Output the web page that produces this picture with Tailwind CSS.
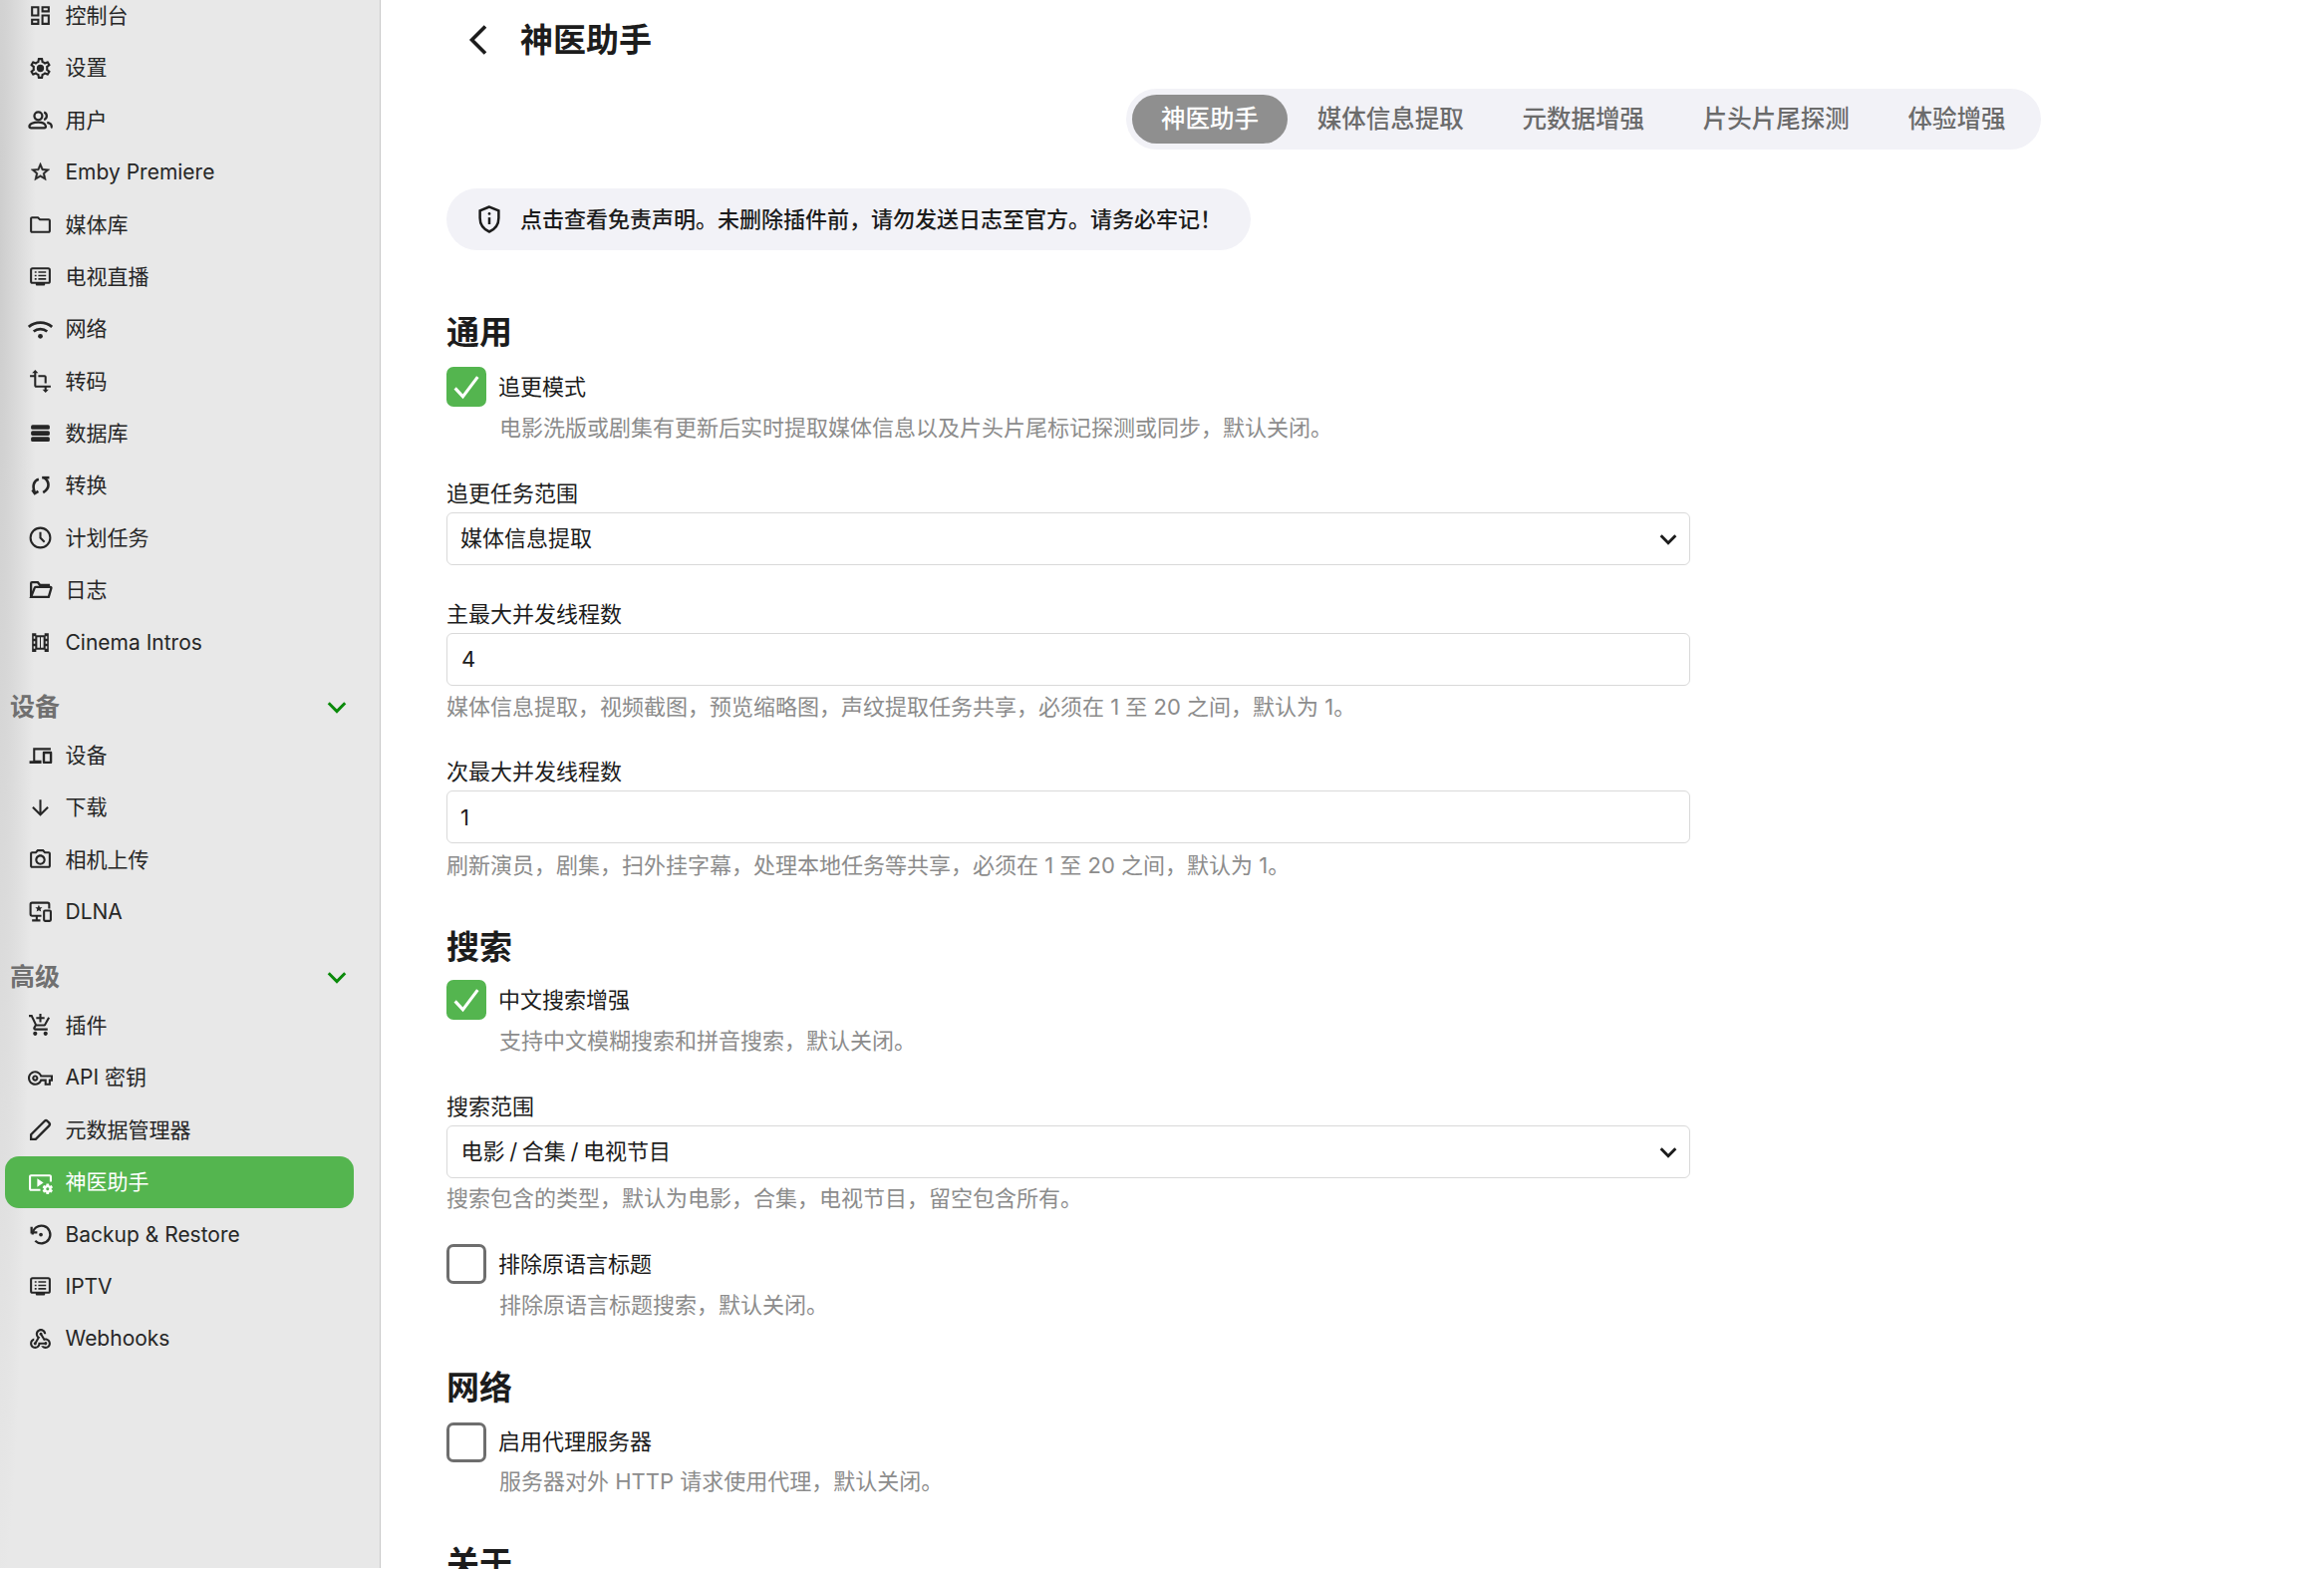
<!DOCTYPE html>
<html lang="zh-CN">
<head>
  <meta charset="UTF-8">
  <title>神医助手</title>
  <script src="https://cdn.jsdelivr.net/npm/@tailwindcss/browser@4"></script>
</head>
<body class="h-[1574px] overflow-hidden bg-white font-['Inter','Noto_Sans_CJK_SC',sans-serif] text-[#1c1c1c]">
<div class="flex h-[1574px]">

  <!-- sidebar -->
  <aside class="w-[382px] h-[1573px] shrink-0 overflow-hidden border-r border-[#c8c8c8] bg-[radial-gradient(ellipse_36px_1350px_at_0_250px,#cdcdcd,#e8e8e8)] text-[21px] text-[#262626]">
    <nav class="-mt-[10.5px]">
      <a class="flex h-[52.4px] items-center gap-[12.5px] pl-7">
        <svg class="size-[25px]" viewBox="0 0 24 24" fill="currentColor"><path d="M19 5v2h-4V5h4M9 5v6H5V5h4m10 8v6h-4v-6h4M9 17v2H5v-2h4M21 3h-8v6h8V3zM11 3H3v10h8V3zm10 8h-8v10h8V11zm-10 4H3v6h8v-6z"/></svg>
        <span>控制台</span>
      </a>
      <a class="flex h-[52.4px] items-center gap-[12.5px] pl-7">
        <svg class="size-[25px]" viewBox="0 0 24 24" fill="currentColor"><path d="M19.43 12.98c.04-.32.07-.64.07-.98 0-.34-.03-.66-.07-.98l2.11-1.65c.19-.15.24-.42.12-.64l-2-3.46c-.09-.16-.26-.25-.44-.25-.06 0-.12.01-.17.03l-2.49 1c-.52-.4-1.08-.73-1.69-.98l-.38-2.65C14.46 2.18 14.25 2 14 2h-4c-.25 0-.46.18-.49.42l-.38 2.65c-.61.25-1.17.59-1.69.98l-2.49-1c-.06-.02-.12-.03-.18-.03-.17 0-.34.09-.43.25l-2 3.46c-.13.22-.07.49.12.64l2.11 1.65c-.04.32-.07.65-.07.98 0 .33.03.66.07.98l-2.11 1.65c-.19.15-.24.42-.12.64l2 3.46c.09.16.26.25.44.25.06 0 .12-.01.17-.03l2.49-1c.52.4 1.08.73 1.69.98l.38 2.65c.03.24.24.42.49.42h4c.25 0 .46-.18.49-.42l.38-2.65c.61-.25 1.17-.59 1.69-.98l2.49 1c.06.02.12.03.18.03.17 0 .34-.09.43-.25l2-3.46c.12-.22.07-.49-.12-.64l-2.11-1.65zm-1.98-1.71c.04.31.05.52.05.73 0 .21-.02.43-.05.73l-.14 1.13.89.7 1.08.84-.7 1.21-1.27-.51-1.04-.42-.9.68c-.43.32-.84.56-1.25.73l-1.06.43-.16 1.13-.2 1.35h-1.4l-.19-1.35-.16-1.13-1.06-.43c-.43-.18-.83-.41-1.23-.71l-.91-.7-1.06.43-1.27.51-.7-1.21 1.08-.84.89-.7-.14-1.13c-.03-.31-.05-.54-.05-.74s.02-.43.05-.73l.14-1.13-.89-.7-1.08-.84.7-1.21 1.27.51 1.04.42.9-.68c.43-.32.84-.56 1.25-.73l1.06-.43.16-1.13.2-1.35h1.39l.19 1.35.16 1.13 1.06.43c.43.18.83.41 1.23.71l.91.7 1.06-.43 1.27-.51.7 1.21-1.07.85-.89.7.14 1.13zM12 8.5a3.5 3.5 0 1 0 0 7 3.5 3.5 0 0 0 0-7z"/></svg>
        <span>设置</span>
      </a>
      <a class="flex h-[52.4px] items-center gap-[12.5px] pl-7">
        <svg class="size-[25px]" viewBox="0 0 24 24" fill="none" stroke="currentColor" stroke-width="2.2"><circle cx="10" cy="8" r="3.8"/><path d="M15.500 4.400a3.800 3.800 0 0 1 0 7.200"/><path d="M1.400 18c0-2.300 3.800-3.900 8.600-3.900 3.900 0 6.500 1.500 7.100 3.400.4 1.400-.3 2-1.300 2H3c-1 0-1.600-.5-1.600-1.500z"/><path d="M18.500 14.300c2.400.5 4.300 1.600 4.300 3.600 0 .7-.2 1.200-.6 1.500"/></svg>
        <span>用户</span>
      </a>
      <a class="flex h-[52.4px] items-center gap-[12.5px] pl-7">
        <svg class="size-[25px]" viewBox="-1.500 -1.500 27 27" fill="currentColor" stroke="currentColor" stroke-width=".6"><path d="M22 9.24l-7.19-.62L12 2 9.19 8.63 2 9.24l5.46 4.73L5.82 21 12 17.27 18.18 21l-1.63-7.03L22 9.24zM12 15.4l-3.76 2.27 1-4.28-3.32-2.88 4.38-.38L12 6.1l1.71 4.04 4.38.38-3.32 2.88 1 4.28L12 15.4z"/></svg>
        <span>Emby Premiere</span>
      </a>
      <a class="flex h-[52.4px] items-center gap-[12.5px] pl-7">
        <svg class="size-[25px]" viewBox="0 0 24 24" fill="currentColor"><path d="M9.17 6l2 2H20v10H4V6h5.17M10 4H4c-1.1 0-1.99.9-1.99 2L2 18c0 1.1.9 2 2 2h16c1.1 0 2-.9 2-2V8c0-1.1-.9-2-2-2h-8l-2-2z"/></svg>
        <span>媒体库</span>
      </a>
      <a class="flex h-[52.4px] items-center gap-[12.5px] pl-7">
        <svg class="size-[25px]" viewBox="0 0 24 24" fill="currentColor"><rect x="3" y="4" width="18" height="14" rx="1.500" fill="none" stroke="currentColor" stroke-width="2"/><path d="M6.500 7h1.800v1.500H6.500zM10 7h7.500v1.500H10zM6.500 10.300h1.800v1.500H6.500zM10 10.300h7.500v1.500H10zM6.500 13.500h1.800V15H6.500zM10 13.500h7.500V15H10z"/><rect x="7.500" y="18" width="9" height="2.600" rx="1"/></svg>
        <span>电视直播</span>
      </a>
      <a class="flex h-[52.4px] items-center gap-[12.5px] pl-7">
        <svg class="size-[25px]" viewBox="0 0 24 24" fill="none" stroke="currentColor" stroke-width="2.600"><path d="M.8 9.500c6.200-5.400 16.200-5.400 22.400 0"/><path d="M5.500 14c3.700-3.100 9.300-3.100 13 0"/><circle cx="12" cy="18.500" r="2.300" fill="currentColor" stroke="none"/></svg>
        <span>网络</span>
      </a>
      <a class="flex h-[52.4px] items-center gap-[12.5px] pl-7">
        <svg class="size-[25px]" viewBox="0 0 24 24" fill="currentColor"><path d="M22 18v-2H8V4h2L7 1 4 4h2v2H2v2h4v8c0 1.1.9 2 2 2h8v2h-2l3 3 3-3h-2v-2h4zM10 8h6v6h2V8c0-1.1-.9-2-2-2h-6v2z"/></svg>
        <span>转码</span>
      </a>
      <a class="flex h-[52.4px] items-center gap-[12.5px] pl-7">
        <svg class="size-[25px]" viewBox="0 0 24 24" fill="currentColor"><rect x="3" y="4" width="18" height="4.500" rx="1.500"/><rect x="3" y="9.800" width="18" height="4.500" rx="1.500"/><rect x="3" y="15.600" width="18" height="4.500" rx="1.500"/></svg>
        <span>数据库</span>
      </a>
      <a class="flex h-[52.4px] items-center gap-[12.5px] pl-7">
        <svg class="size-[25px]" viewBox="0 0 24 24" fill="none" stroke="currentColor" stroke-width="2.500"><path d="M10.400 5.600C6 6.800 3.800 11.500 6.600 18.400"/><path d="M4.300 15.800l2.300 3.400 3.400-2.100"/><path d="M13.600 4h7"/><path d="M15.500 4c5 3.500 6.500 10-.9 14.400"/></svg>
        <span>转换</span>
      </a>
      <a class="flex h-[52.4px] items-center gap-[12.5px] pl-7">
        <svg class="size-[25px]" viewBox="0 0 24 24" fill="none" stroke="currentColor" stroke-width="2"><circle cx="12" cy="12" r="9.500"/><path d="M12 6.500V12l4 4"/></svg>
        <span>计划任务</span>
      </a>
      <a class="flex h-[52.4px] items-center gap-[12.5px] pl-7">
        <svg class="size-[25px]" viewBox="0 0 24 24" fill="none" stroke="currentColor" stroke-width="2.200"><path d="M3 19V6a1 1 0 0 1 1-1h5.500l2 2.500H20v2"/><path d="M3 19h17l2.500-8.500a.8.8 0 0 0-.8-1H7.500a1 1 0 0 0-1 .7z"/></svg>
        <span>日志</span>
      </a>
      <a class="flex h-[52.4px] items-center gap-[12.5px] pl-7">
        <svg class="size-[25px]" viewBox="0 0 24 24" fill="currentColor"><path d="M4 3h4v2h8V3h4v18h-4v-2H8v2H4zM9 7v10h2.500V7zm3.500 0v10H15V7zM5.500 6v2.500H7V6zm11.500 0v2.500h1.500V6zM5.500 10.700v2.600H7v-2.600zm11.500 0v2.600h1.500v-2.600zM5.500 15.500V18H7v-2.500zm11.500 0V18h1.500v-2.500z" fill-rule="evenodd"/></svg>
        <span>Cinema Intros</span>
      </a>
    </nav>

    <div class="flex h-[61px] items-end justify-between pb-[5.5px] pl-[10px] pr-[32px]">
      <span class="text-[25px] leading-[34px] font-semibold text-[#707070]">设备</span>
      <svg class="mb-[6px] size-[22px] text-[#0a8a0a]" viewBox="0 0 24 24" fill="none" stroke="currentColor" stroke-width="3.200"><path d="M3 8l9 9 9-9"/></svg>
    </div>
    <nav>
      <a class="flex h-[52.4px] items-center gap-[12.5px] pl-7">
        <svg class="size-[25px]" viewBox="0 0 24 24" fill="currentColor"><path d="M5 5h17v2.200H7V17h6v3.200H1.500V17.500H5zM15.500 8.500h6.500c.8 0 1.300.5 1.300 1.300v9.100c0 .8-.5 1.300-1.300 1.300h-6.500c-.8 0-1.300-.5-1.300-1.300V9.800c0-.8.500-1.300 1.300-1.300zm1 2.200v7.300h4.500v-7.300z" fill-rule="evenodd"/></svg>
        <span>设备</span>
      </a>
      <a class="flex h-[52.4px] items-center gap-[12.5px] pl-7">
        <svg class="size-[25px]" viewBox="0 0 24 24" fill="currentColor"><path d="M20 12l-1.410-1.410L13 16.170V4h-2v12.170l-5.580-5.590L4 12l8 8 8-8z"/></svg>
        <span>下载</span>
      </a>
      <a class="flex h-[52.4px] items-center gap-[12.5px] pl-7">
        <svg class="size-[25px]" viewBox="0 0 24 24" fill="currentColor"><path d="M14.120 4l1.830 2H20v12H4V6h4.050l1.830-2h4.240M15 2H9L7.170 4H4c-1.100 0-2 .9-2 2v12c0 1.100.9 2 2 2h16c1.100 0 2-.9 2-2V6c0-1.100-.9-2-2-2h-3.170L15 2zm-3 7c1.650 0 3 1.350 3 3s-1.350 3-3 3-3-1.350-3-3 1.350-3 3-3m0-2c-2.760 0-5 2.240-5 5s2.240 5 5 5 5-2.240 5-5-2.240-5-5-5z"/></svg>
        <span>相机上传</span>
      </a>
      <a class="flex h-[52.4px] items-center gap-[12.5px] pl-7">
        <svg class="size-[25px]" viewBox="0 0 24 24" fill="none" stroke="currentColor" stroke-width="2"><path d="M13 16H4a1.500 1.500 0 0 1-1.500-1.500V5A1.500 1.500 0 0 1 4 3.500h15A1.500 1.500 0 0 1 20.500 5v4"/><path d="M4 20.500h8M8.500 16v4.500"/><rect x="15.500" y="11" width="6.500" height="10" rx="1"/><path d="M10.500 5.500l1 2.300 2.400.2-1.800 1.600.6 2.400-2.200-1.300-2.200 1.300.6-2.400L7 8l2.400-.2z" fill="currentColor" stroke="none"/></svg>
        <span>DLNA</span>
      </a>
    </nav>

    <div class="flex h-[61.5px] items-end justify-between pb-[5.5px] pl-[10px] pr-[32px]">
      <span class="text-[25px] leading-[34px] font-semibold text-[#707070]">高级</span>
      <svg class="mb-[6px] size-[22px] text-[#0a8a0a]" viewBox="0 0 24 24" fill="none" stroke="currentColor" stroke-width="3.200"><path d="M3 8l9 9 9-9"/></svg>
    </div>
    <nav>
      <a class="flex h-[52.4px] items-center gap-[12.5px] pl-7">
        <svg class="size-[25px]" viewBox="0 0 24 24" fill="currentColor"><path d="M11 9h2V6h3V4h-3V1h-2v3H8v2h3v3zm-4 9c-1.100 0-1.990.9-1.990 2S5.900 22 7 22s2-.9 2-2-.9-2-2-2zm10 0c-1.100 0-1.990.9-1.990 2s.89 2 1.990 2 2-.9 2-2-.9-2-2-2zm-9.830-3.250l.03-.12.9-1.630h7.450c.75 0 1.410-.41 1.750-1.030l3.860-7.010L19.420 4h-.01l-1.100 2-2.760 5H8.530l-.13-.27L6.160 6l-.95-2-.94-2H1v2h2l3.600 7.590-1.350 2.450c-.16.28-.25.61-.25.96 0 1.100.9 2 2 2h12v-2H7.420c-.13 0-.25-.11-.25-.25z"/></svg>
        <span>插件</span>
      </a>
      <a class="flex h-[52.4px] items-center gap-[12.5px] pl-7">
        <svg class="size-[25px]" viewBox="0 0 24 24" fill="currentColor"><path d="M22 19h-6v-4h-2.680c-1.140 2.420-3.600 4-6.320 4-3.860 0-7-3.140-7-7s3.140-7 7-7c2.720 0 5.170 1.580 6.320 4H24v6h-2v4zm-4-2h2v-4h2v-2H11.940l-.23-.67C11.010 8.340 9.110 7 7 7c-2.760 0-5 2.240-5 5s2.240 5 5 5c2.110 0 4.010-1.340 4.710-3.330l.23-.67H18v4zM7 15c-1.650 0-3-1.350-3-3s1.350-3 3-3 3 1.350 3 3-1.350 3-3 3zm0-4c-.55 0-1 .45-1 1s.45 1 1 1 1-.45 1-1-.45-1-1-1z"/></svg>
        <span>API 密钥</span>
      </a>
      <a class="flex h-[52.4px] items-center gap-[12.5px] pl-7">
        <svg class="size-[25px]" viewBox="0 0 24 24" fill="none" stroke="currentColor" stroke-width="2.200"><path d="M3 21v-4.500L16 3.600a2 2 0 0 1 2.800 0l1.600 1.600a2 2 0 0 1 0 2.800L7.500 21z"/></svg>
        <span>元数据管理器</span>
      </a>
      <a class="ml-[5px] mr-[26px] flex h-[52.4px] items-center gap-[12.5px] rounded-[14px] bg-[#54b54f] pl-[23px] text-white">
        <svg class="size-[25px]" viewBox="0 0 24 24" fill="currentColor"><path d="M3 6h18v5h2V6c0-1.100-.9-2-2-2H3C1.900 4 1 4.900 1 6v12c0 1.100.9 2 2 2h9v-2H3V6z"/><path d="M15 12l-6-4v8l6-4z"/><path d="M22.710 18.430c.03-.29.04-.58.01-.86l1.070-.85c.1-.08.12-.21.06-.32l-1.030-1.790c-.06-.11-.19-.15-.31-.11L21.230 15c-.23-.17-.48-.31-.75-.42l-.2-1.360c-.02-.13-.12-.22-.25-.22h-2.070c-.12 0-.23.09-.25.21l-.2 1.360c-.26.11-.51.26-.74.42l-1.280-.5c-.12-.05-.25 0-.31.11l-1.030 1.790c-.06.11-.04.24.06.32l1.070.86c-.03.29-.04.58-.01.86l-1.070.85c-.1.08-.12.21-.06.32l1.030 1.790c.06.11.19.15.31.11l1.270-.5c.23.17.48.31.75.42l.2 1.360c.02.12.12.21.25.21h2.070c.12 0 .23-.09.25-.21l.2-1.360c.26-.11.51-.26.74-.42l1.280.5c.12.05.25 0 .31-.11l1.030-1.790c.06-.11.04-.24-.06-.32l-1.070-.85zM19 19.500c-.83 0-1.500-.67-1.500-1.500s.67-1.500 1.500-1.500 1.500.67 1.500 1.500-.67 1.500-1.500 1.500z"/></svg>
        <span>神医助手</span>
      </a>
      <a class="flex h-[52.4px] items-center gap-[12.5px] pl-7">
        <svg class="size-[25px]" viewBox="0 0 24 24" fill="none" stroke="currentColor" stroke-width="2.200"><path d="M4.500 12a8.500 8.500 0 1 1 2.500 6"/><path d="M3.500 4.500v5.500H9" stroke-width="2.200"/><circle cx="12.500" cy="12" r="1.800" fill="currentColor" stroke="none"/></svg>
        <span>Backup &amp; Restore</span>
      </a>
      <a class="flex h-[52.4px] items-center gap-[12.5px] pl-7">
        <svg class="size-[25px]" viewBox="0 0 24 24" fill="currentColor"><rect x="3" y="4" width="18" height="14" rx="1.500" fill="none" stroke="currentColor" stroke-width="2"/><path d="M6.500 7h1.800v1.500H6.500zM10 7h7.500v1.500H10zM6.500 10.300h1.800v1.500H6.500zM10 10.300h7.500v1.500H10zM6.500 13.500h1.800V15H6.500zM10 13.500h7.500V15H10z"/><rect x="7.500" y="18" width="9" height="2.600" rx="1"/></svg>
        <span>IPTV</span>
      </a>
      <a class="flex h-[52.4px] items-center gap-[12.5px] pl-7">
        <svg class="size-[25px]" viewBox="0 0 24 24" fill="currentColor"><path d="M10 15h5.880c.27-.31.67-.5 1.120-.5.83 0 1.500.67 1.500 1.500s-.67 1.500-1.500 1.500c-.44 0-.84-.19-1.120-.5H11.900c-.46 2.280-2.480 4-4.900 4-2.760 0-5-2.240-5-5 0-2.420 1.720-4.440 4-4.900v2.070c-1.160.41-2 1.530-2 2.830 0 1.650 1.350 3 3 3s3-1.350 3-3v-1zm2.500-11c1.660 0 3 1.340 3 3h2c0-2.760-2.240-5-5-5s-5 2.240-5 5c0 1.430.6 2.710 1.550 3.620l-2.350 3.900c-.68.14-1.200.75-1.200 1.480 0 .83.67 1.500 1.500 1.500s1.500-.67 1.500-1.500c0-.16-.02-.31-.07-.45l3.380-5.630C10.490 9.610 9.500 8.420 9.500 7c0-1.660 1.340-3 3-3zm4.500 9c-.64 0-1.230.2-1.720.54l-3.050-5.070C11.530 8.350 11 7.740 11 7c0-.83.67-1.500 1.500-1.500S14 6.170 14 7c0 .15-.02.29-.06.43l2.190 3.650c.28-.05.57-.08.87-.08 2.760 0 5 2.240 5 5s-2.240 5-5 5c-1.850 0-3.470-1.010-4.330-2.500h2.670c.48.320 1.050.5 1.660.5 1.650 0 3-1.350 3-3s-1.350-3-3-3z"/></svg>
        <span>Webhooks</span>
      </a>
    </nav>
  </aside>

  <!-- main -->
  <main class="w-[1600px] ml-[66px] text-[22px]">
    <div class="flex h-[80px] items-center">
      <svg class="ml-[15px] size-[36px]" viewBox="0 0 24 24" fill="none" stroke="currentColor" stroke-width="2.400"><path d="M16 3 7 12l9 9"/></svg>
      <h1 class="ml-[23px] pt-[2px] text-[33px] font-semibold">神医助手</h1>
    </div>

    <div class="mt-[9px] flex justify-end">
      <div class="flex h-[61px] items-center rounded-full bg-[#f2f2f7] px-[6px] text-[24.5px] font-medium text-[#6b6b6b]">
        <span class="flex h-[49px] items-center rounded-full bg-[#8f8f8f] px-[29.4px] text-white">神医助手</span>
        <span class="px-[29.4px]">媒体信息提取</span>
        <span class="px-[29.4px]">元数据增强</span>
        <span class="px-[29.4px]">片头片尾探测</span>
        <span class="px-[29.4px]">体验增强</span>
      </div>
    </div>

    <div class="mt-[39px] flex h-[62px] w-[807px] items-center rounded-full bg-[#f2f2f7] pl-[28px] font-medium">
      <svg class="size-[30px] shrink-0" viewBox="0 0 24 24" fill="none" stroke="currentColor" stroke-width="2"><path d="M12 2 4.500 5v6c0 5 3 9 7.500 11 4.500-2 7.500-6 7.500-11V5z"/><path d="M12 10.500V16"/><circle cx="12" cy="7.500" r="1.100" fill="currentColor" stroke="none"/></svg>
      <span class="ml-[16px]">点击查看免责声明。未删除插件前，请勿发送日志至官方。请务必牢记！</span>
    </div>

    <!-- 通用 -->
    <h2 class="mt-[58px] h-[48px] text-[33px] leading-[48px] font-semibold">通用</h2>
    <label class="mt-[11px] flex h-[40px] items-center">
      <span class="flex size-[40px] items-center justify-center rounded-[7px] bg-[#54b54f]">
        <svg class="size-[34px] text-white" viewBox="0 0 24 24" fill="none" stroke="currentColor" stroke-width="2.200"><path d="M4 13l5.500 6L20 5"/></svg>
      </span>
      <span class="ml-[12px]">追更模式</span>
    </label>
    <p class="mt-[6px] h-[30px] pl-[53px] leading-[30px] text-[#8c8c8c]">电影洗版或剧集有更新后实时提取媒体信息以及片头片尾标记探测或同步，默认关闭。</p>

    <p class="mt-[36px] h-[30px] leading-[30px]">追更任务范围</p>
    <div class="mt-[4px] flex h-[53px] w-[1248px] items-center justify-between rounded-[6px] border border-[#d9d9d9] pl-[13px] pr-[10px]">
      <span>媒体信息提取</span>
      <svg class="size-[22px]" viewBox="0 0 24 24" fill="none" stroke="currentColor" stroke-width="3.200"><path d="M4 8l8 8 8-8"/></svg>
    </div>

    <p class="mt-[35px] h-[30px] leading-[28px]">主最大并发线程数</p>
    <div class="mt-[3px] flex h-[53px] w-[1248px] items-center rounded-[6px] border border-[#d9d9d9] pl-[14px]">4</div>
    <p class="mt-[7px] h-[30px] leading-[28px] text-[#8c8c8c]">媒体信息提取，视频截图，预览缩略图，声纹提取任务共享，必须在 1 至 20 之间，默认为 1。</p>

    <p class="mt-[35px] h-[30px] leading-[28px]">次最大并发线程数</p>
    <div class="mt-[3px] flex h-[53px] w-[1248px] items-center rounded-[6px] border border-[#d9d9d9] pl-[13px] pt-[2px]">1</div>
    <p class="mt-[7px] h-[30px] leading-[30px] text-[#8c8c8c]">刷新演员，剧集，扫外挂字幕，处理本地任务等共享，必须在 1 至 20 之间，默认为 1。</p>

    <!-- 搜索 -->
    <h2 class="mt-[42px] h-[48px] text-[33px] leading-[50px] font-semibold">搜索</h2>
    <label class="mt-[10px] flex h-[40px] items-center">
      <span class="flex size-[40px] items-center justify-center rounded-[7px] bg-[#54b54f]">
        <svg class="size-[34px] text-white" viewBox="0 0 24 24" fill="none" stroke="currentColor" stroke-width="2.200"><path d="M4 13l5.500 6L20 5"/></svg>
      </span>
      <span class="ml-[12px]">中文搜索增强</span>
    </label>
    <p class="mt-[7px] h-[30px] pl-[53px] leading-[28px] text-[#8c8c8c]">支持中文模糊搜索和拼音搜索，默认关闭。</p>

    <p class="mt-[36px] h-[30px] leading-[28px]">搜索范围</p>
    <div class="mt-[3px] flex h-[53px] w-[1248px] items-center justify-between rounded-[6px] border border-[#d9d9d9] pl-[13.5px] pr-[10px]">
      <span class="[word-spacing:-1.5px]">电影 / 合集 / 电视节目</span>
      <svg class="size-[22px]" viewBox="0 0 24 24" fill="none" stroke="currentColor" stroke-width="3.200"><path d="M4 8l8 8 8-8"/></svg>
    </div>
    <p class="mt-[6px] h-[30px] leading-[28px] text-[#8c8c8c]">搜索包含的类型，默认为电影，合集，电视节目，留空包含所有。</p>

    <label class="mt-[30px] flex h-[40px] items-center">
      <span class="size-[40px] rounded-[7px] border-[3px] border-[#6e6e6e]"></span>
      <span class="ml-[12px]">排除原语言标题</span>
    </label>
    <p class="mt-[7px] h-[30px] pl-[53px] leading-[28px] text-[#8c8c8c]">排除原语言标题搜索，默认关闭。</p>

    <!-- 网络 -->
    <h2 class="mt-[42px] h-[48px] text-[33px] leading-[50px] font-semibold">网络</h2>
    <label class="mt-[12px] flex h-[40px] items-center">
      <span class="size-[40px] rounded-[7px] border-[3px] border-[#6e6e6e]"></span>
      <span class="ml-[12px] pb-[2px]">启用代理服务器</span>
    </label>
    <p class="mt-[5px] h-[30px] pl-[53px] leading-[28px] text-[#8c8c8c]">服务器对外 HTTP 请求使用代理，默认关闭。</p>

    <h2 class="mt-[41px] h-[48px] text-[33px] leading-[50px] font-semibold">关于</h2>
  </main>
</div>
</body>
</html>
